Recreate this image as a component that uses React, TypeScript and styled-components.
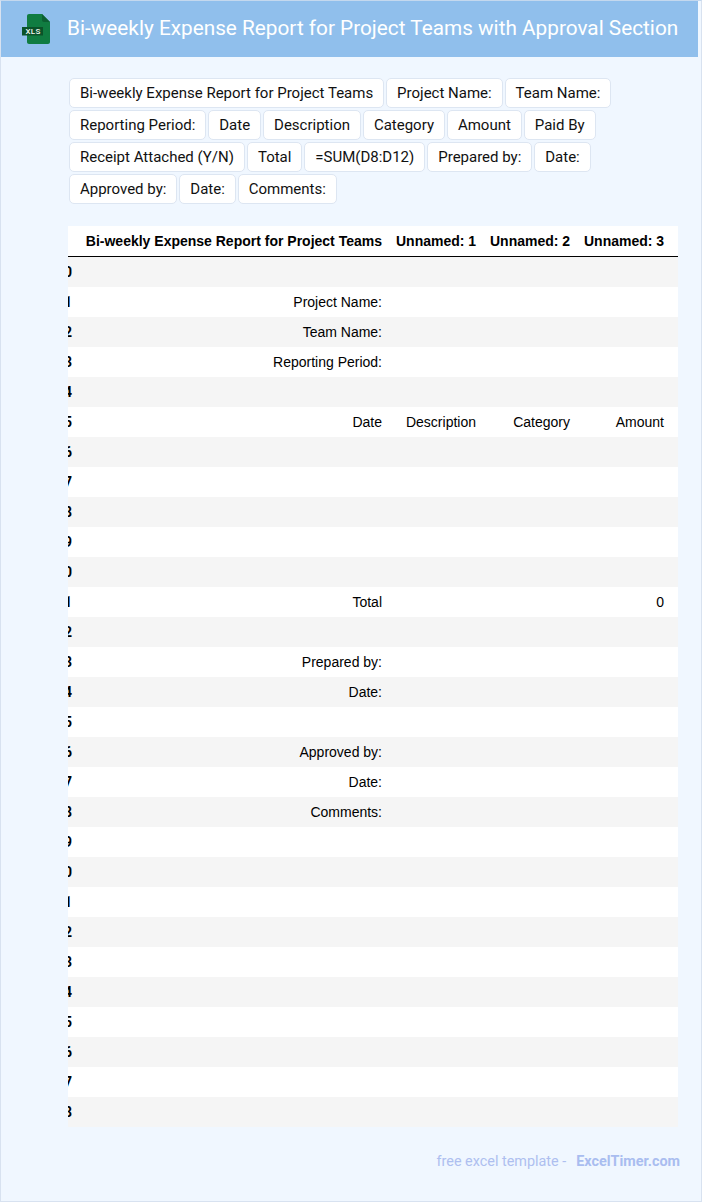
import React from 'react';
import styled, {createGlobalStyle} from 'styled-components';

const chips = [
  'Bi-weekly Expense Report for Project Teams',
  'Project Name:',
  'Team Name:',
  'Reporting Period:',
  'Date',
  'Description',
  'Category',
  'Amount',
  'Paid By',
  'Receipt Attached (Y/N)',
  'Total',
  '=SUM(D8:D12)',
  'Prepared by:',
  'Date:',
  'Approved by:',
  'Date:',
  'Comments:',
];

const columns = ['Bi-weekly Expense Report for Project Teams', 'Unnamed: 1', 'Unnamed: 2', 'Unnamed: 3'];

// row index -> cells, everything else stays empty
const filled: Record<number, string[]> = {
  1: ['Project Name:'],
  2: ['Team Name:'],
  3: ['Reporting Period:'],
  5: ['Date', 'Description', 'Category', 'Amount'],
  11: ['Total', '', '', '0'],
  13: ['Prepared by:'],
  14: ['Date:'],
  16: ['Approved by:'],
  17: ['Date:'],
  18: ['Comments:'],
};

const rows = Array.from({length: 29}, (_, i) => i);

function App() {
  return (
    <Page>
      <GlobalStyle />
      <Header>
        <FileIcon viewBox="0 0 28 30" aria-hidden="true">
          <path d="M5 2C5 .9 5.9 0 7 0H20L28 8V28C28 29.1 27.1 30 26 30H7C5.9 30 5 29.1 5 28V2Z" fill="#107c41" />
          <path d="M20 0L28 8H22C20.9 8 20 7.1 20 6V0Z" fill="#0c5f32" />
          <rect x="0" y="13" width="21" height="8.5" fill="#0a5229" />
          <IconLabel x="11" y="20" textAnchor="middle">
            XLS
          </IconLabel>
        </FileIcon>
        <Title>Bi-weekly Expense Report for Project Teams with Approval Section</Title>
      </Header>
      <Content>
        <ChipList>
          {chips.map((c, i) => (
            <Chip key={i}>{c}</Chip>
          ))}
        </ChipList>
        <TableWrap>
          <DataTable>
            <thead>
              <tr>
                <IndexHead />
                {columns.map((c) => (
                  <HeadCell key={c}>{c}</HeadCell>
                ))}
                <FillerHead />
              </tr>
            </thead>
            <tbody>
              {rows.map((r) => (
                <Row key={r} $striped={r % 2 === 0}>
                  <IndexCell>{r}</IndexCell>
                  {columns.map((c, i) => (
                    <Cell key={c}>{filled[r]?.[i] ?? ''}</Cell>
                  ))}
                  <FillerCell />
                </Row>
              ))}
            </tbody>
          </DataTable>
        </TableWrap>
      </Content>
      <Footer>
        free excel template -<FooterLink>ExcelTimer.com</FooterLink>
      </Footer>
    </Page>
  );
}

const GlobalStyle = createGlobalStyle`
  html, body {
    margin: 0;
    padding: 0;
    background: #f0f7ff;
  }
`;

const Page = styled.div`
  box-sizing: border-box;
  width: 702px;
  height: 1202px;
  overflow: hidden;
  background: #f0f7ff;
  border: 1px solid #d8e2f0;
  border-top-color: #c4d8ee;
  font-family: Roboto, sans-serif;
`;

const Header = styled.header`
  display: flex;
  align-items: center;
  gap: 17px;
  width: 697px;
  height: 56px;
  padding-left: 21px;
  box-sizing: border-box;
  background: #90bfec;
`;

const FileIcon = styled.svg`
  width: 28px;
  height: 30px;
  flex: none;
`;

const IconLabel = styled.text`
  font-family: Roboto, sans-serif;
  font-size: 8px;
  font-weight: 500;
  letter-spacing: 0.3px;
  fill: #f2f8f4;
`;

const Title = styled.h1`
  margin: 0 0 2px;
  font-size: 20.77px;
  font-weight: 400;
  color: #fff;
  white-space: nowrap;
`;

const Content = styled.main`
  padding: 20px 23px 0 67px;
`;

const ChipList = styled.div`
  display: flex;
  flex-wrap: wrap;
  align-content: flex-start;
`;

const Chip = styled.span`
  box-sizing: border-box;
  height: 30px;
  margin: 1px;
  padding: 0 9.97px;
  line-height: 28px;
  font-size: 15px;
  color: #111;
  background: #fff;
  border: 1px solid #dde6f2;
  border-radius: 5px;
  white-space: nowrap;
`;

const TableWrap = styled.div`
  margin-top: 21px;
  overflow: hidden;
`;

const DataTable = styled.table`
  margin-left: -14px;
  border-collapse: collapse;
  border-spacing: 0;
  table-layout: fixed;
  width: 624px;
  font-family: 'Liberation Sans', Arial, sans-serif;
  font-size: 14px;
  color: #000;
  background: #fff;
`;

const HeadCell = styled.th`
  width: 80px;
  height: 30px;
  padding: 0 7px;
  font-weight: 700;
  text-align: right;
  white-space: nowrap;
  border-bottom: 1px solid #000;

  &:nth-child(2) {
    width: 303px;
  }
`;

const IndexHead = styled.th`
  width: 18px;
  padding: 0;
  border-bottom: 1px solid #000;
`;

const FillerHead = styled.th`
  width: 7px;
  padding: 0;
  border-bottom: 1px solid #000;
`;

const FillerCell = styled.td`
  padding: 0;
`;

const Row = styled.tr<{$striped: boolean}>`
  height: 30px;
  background: ${({$striped}) => ($striped ? '#f5f5f5' : '#fff')};
`;

const IndexCell = styled.th`
  padding: 0;
  font-family: Roboto, sans-serif;
  font-weight: 700;
  text-align: right;
  white-space: nowrap;
  direction: rtl;
`;

const Cell = styled.td`
  height: 30px;
  padding: 0 7px;
  text-align: right;
  white-space: nowrap;
`;

const Footer = styled.footer`
  display: flex;
  justify-content: flex-end;
  gap: 10px;
  margin-top: 26px;
  padding-right: 21px;
  font-size: 14.4px;
  line-height: 18px;
  color: #aebff0;
`;

const FooterLink = styled.span`
  font-weight: 700;
  color: #a9bdf0;
`;

export default App;
